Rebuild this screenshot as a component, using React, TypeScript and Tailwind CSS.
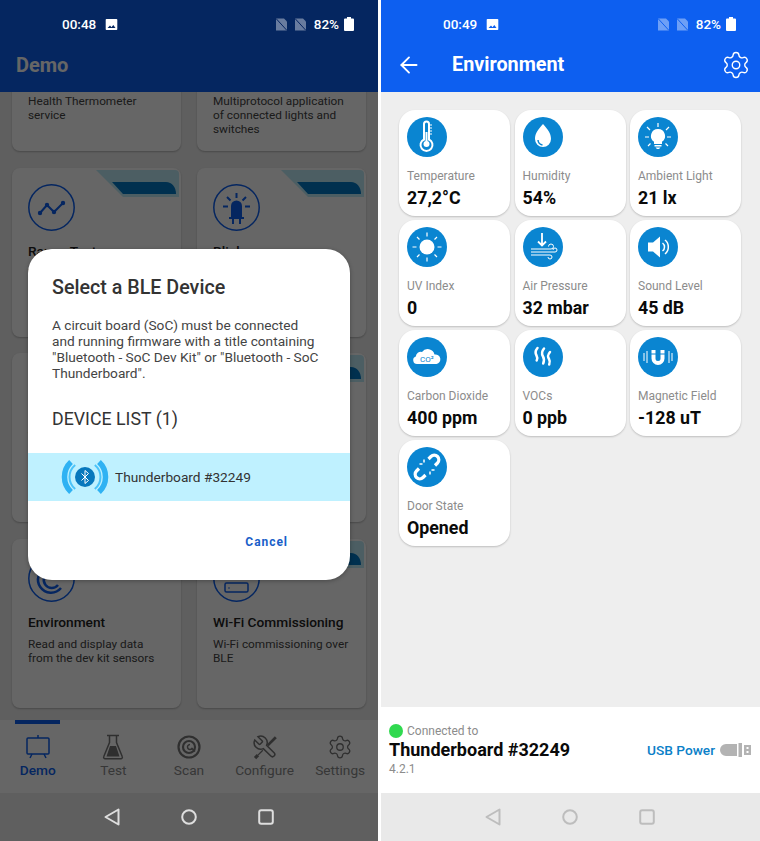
import { ArrowLeft, Settings } from "lucide-react";
import type { ReactNode } from "react";

const white = "#ffffff";

function ImageGlyph() {
  return (
    <svg width="13" height="13" viewBox="0 0 13 13">
      <path fill={white} fillRule="evenodd" d="M1.5 1h10a.8.8 0 0 1 .8.8v9.4a.8.8 0 0 1-.8.8h-10a.8.8 0 0 1-.8-.8V1.800a.8.8 0 0 1 .8-.8zM2.500 10h8L8.300 7 6.500 9.200 5 7.500z" />
    </svg>
  );
}

function NoSim({ cut }: { cut: string }) {
  return (
    <svg width="11" height="13" viewBox="0 0 11 13">
      <path fill={white} fillOpacity="0.4" d="M0 .5h8L11 3.500V12.500H0z" />
      <path stroke={cut} strokeWidth="1" d="M0 .5L11 12.500" />
    </svg>
  );
}

function Battery() {
  return (
    <svg width="10" height="14" viewBox="0 0 10 14">
      <path fill={white} d="M3 0h4v1.500h2a1 1 0 0 1 1 1V13a1 1 0 0 1-1 1H1a1 1 0 0 1-1-1V2.500a1 1 0 0 1 1-1h2z" />
    </svg>
  );
}

function StatusBar({ time, cut }: { time: string; cut: string }) {
  return (
    <div className="flex h-12 items-center pl-[62px] pr-[24px] text-[13.500px] font-medium text-white">
      <span>{time}</span>
      <span className="ml-[9px] flex"><ImageGlyph /></span>
      <span className="ml-auto flex gap-[8px]"><NoSim cut={cut} /><NoSim cut={cut} /></span>
      <span className="ml-[8px]">82%</span>
      <span className="ml-[5px] flex"><Battery /></span>
    </div>
  );
}

function NavBar({ color }: { color: string }) {
  return (
    <div className="flex h-12 items-center justify-center gap-[61px]">
      <svg width="16" height="18" viewBox="0 0 16 18" fill="none" stroke={color} strokeWidth="2" strokeLinejoin="round"><path d="M14.500 1.500v15L1.500 9z" /></svg>
      <svg width="16" height="16" viewBox="0 0 16 16" fill="none" stroke={color} strokeWidth="2"><circle cx="8" cy="8" r="6.800" /></svg>
      <svg width="16" height="16" viewBox="0 0 16 16" fill="none" stroke={color} strokeWidth="2"><rect x="1.200" y="1.200" width="13.600" height="13.600" rx="2" /></svg>
    </div>
  );
}

const blue = "#0d5ff0";

function Ribbon() {
  return (
    <svg className="absolute right-[2px] top-[2px]" width="83" height="27" viewBox="0 0 83 27">
      <path fill="#bfeaf7" d="M0 0H79a4 4 0 0 1 4 4V27H27z" />
      <path fill="#0079c6" d="M16 12H70c6 0 10 5 10 12H27z" />
    </svg>
  );
}

function RangeIcon() {
  return (
    <svg width="47" height="47" viewBox="0 0 47 47" fill="none">
      <circle cx="23.500" cy="23.500" r="22.700" stroke={blue} strokeWidth="1.500" />
      <path d="M12 29l7-8 7 7 9-9" stroke={blue} strokeWidth="2" />
      <circle cx="12" cy="29" r="2.200" fill={blue} /><circle cx="19" cy="21" r="2.200" fill={blue} />
      <circle cx="26" cy="28" r="2.200" fill={blue} /><circle cx="35" cy="19" r="2.200" fill={blue} />
    </svg>
  );
}

function BlinkyIcon() {
  return (
    <svg width="47" height="47" viewBox="0 0 47 47" fill="none">
      <circle cx="23.500" cy="23.500" r="22.700" stroke={blue} strokeWidth="1.500" />
      <path fill={blue} d="M18 33V22a5.500 5.500 0 0 1 11 0v11z" />
      <path d="M16 34h15M20 34v6M27 34v6" stroke={blue} strokeWidth="2" />
      <path d="M23.500 9v5M14 13l3.500 3.500M33 13l-3.500 3.500M10 22.500h5M32 22.500h5" stroke={blue} strokeWidth="2" />
    </svg>
  );
}

function EnvIcon() {
  return (
    <svg width="47" height="47" viewBox="0 0 47 47" fill="none">
      <circle cx="23.500" cy="23.500" r="22.700" stroke={blue} strokeWidth="1.500" />
      <path d="M33 33a13 13 0 1 1 3-9" stroke={blue} strokeWidth="2.500" />
      <path d="M30 30a8 8 0 1 1 1.500-7" stroke={blue} strokeWidth="2.500" />
    </svg>
  );
}

function WifiIcon() {
  return (
    <svg width="47" height="47" viewBox="0 0 47 47" fill="none">
      <circle cx="23.500" cy="23.500" r="22.700" stroke={blue} strokeWidth="1.500" />
      <rect x="12" y="28" width="23" height="9" rx="1.500" stroke={blue} strokeWidth="1.500" />
      <circle cx="16" cy="33" r=".8" fill={blue} />
    </svg>
  );
}

type DemoCard = { title: string; desc: string; icon?: ReactNode; ribbon?: boolean };

const demoCards: DemoCard[] = [
  { title: "Health Thermometer", desc: "Health Thermometer service" },
  { title: "Connected Lighting", desc: "Multiprotocol application of connected lights and switches" },
  { title: "Range Test", desc: "Visualize the RF performance", icon: <RangeIcon />, ribbon: true },
  { title: "Blinky", desc: "The Bluetooth equivalent of Hello World", icon: <BlinkyIcon />, ribbon: true },
  { title: "Throughput", desc: "Measure the data rate", icon: <RangeIcon />, ribbon: true },
  { title: "Motion", desc: "Display the board orientation", icon: <EnvIcon />, ribbon: true },
  { title: "Environment", desc: "Read and display data from the dev kit sensors", icon: <EnvIcon />, ribbon: true },
  { title: "Wi-Fi Commissioning", desc: "Wi-Fi commissioning over BLE", icon: <WifiIcon />, ribbon: true },
];

function DemoTile({ card }: { card: DemoCard }) {
  return (
    <div className="relative h-[169px] rounded-[8px] bg-white pl-4 pr-[10px] pt-[16px] shadow-[0_1px_2px_rgba(0,0,0,0.25)]">
      {card.ribbon && <Ribbon />}
      <div className={card.icon ? "h-[47px]" : "h-[61px]"}>{card.icon}</div>
      <div className="mt-[10px] text-[13.700px] font-medium leading-[20px] text-[#222]">{card.title}</div>
      <div className="mt-[5px] text-[11.800px] leading-[14px] text-[#444]">{card.desc}</div>
    </div>
  );
}

function TabIcon({ name, color }: { name: string; color: string }) {
  if (name === "Demo") {
    return (
      <svg width="24" height="26" viewBox="0 0 24 26" fill="none" stroke={color} strokeWidth="1.500">
        <rect x="1" y="4" width="22" height="16" rx="1" />
        <path d="M12 1v3M6 20l-2 4M18 20l2 4" />
      </svg>
    );
  }
  if (name === "Test") {
    return (
      <svg width="22" height="26" viewBox="0 0 22 26" fill="none" stroke={color} strokeWidth="1.500">
        <path d="M5 1.500h12M7.500 1.500v7L1.800 22.500a1.500 1.500 0 0 0 1.500 2.200h15.400a1.500 1.500 0 0 0 1.500-2.200L14.500 8.500v-7" />
        <path fill={color} stroke="none" d="M8 12h6l3.500 10.500h-13z" />
      </svg>
    );
  }
  if (name === "Scan") {
    return (
      <svg width="24" height="24" viewBox="0 0 24 24" fill="none" stroke={color} strokeWidth="2.200">
        <circle cx="12" cy="12" r="10.500" />
        <circle cx="12" cy="12" r="6" />
        <path d="M13 9.500a2.500 2.500 0 1 0 2 4l3 3" strokeWidth="1.500" />
      </svg>
    );
  }
  if (name === "Configure") {
    return (
      <svg width="26" height="26" viewBox="0 0 24 24" fill="none" stroke={color} strokeWidth="1.400">
        <path transform="translate(24 0) scale(-1 1)" d="M14.700 6.300a1 1 0 0 0 0 1.400l1.600 1.600a1 1 0 0 0 1.400 0l3.770-3.770a6 6 0 0 1-7.940 7.940l-6.910 6.910a2.120 2.120 0 0 1-3-3l6.910-6.910a6 6 0 0 1 7.940-7.940l-3.760 3.760z" />
        <path d="M22 3l-7.500 7.500" strokeWidth="2.500" />
        <path d="M10 15l-4.500 4.500" strokeWidth="1.200" />
        <path d="M5.500 19.500L2.800 22.200" strokeWidth="3" />
      </svg>
    );
  }
  return <Settings size={26} color={color} strokeWidth={1.200} />;
}

const tabs = ["Demo", "Test", "Scan", "Configure", "Settings"];

function BottomTabs() {
  return (
    <div className="grid h-[73px] grid-cols-5 bg-white">
      {tabs.map((t, i) => (
        <div key={t} className="relative flex flex-col items-center pt-[13px]">
          {i === 0 && <div className="absolute left-[15px] top-0 h-[4px] w-[45px] bg-[#0d5ff0]" />}
          <div className="flex h-[27px] items-center justify-center">
            <TabIcon name={t} color={i === 0 ? "#0d5ff0" : "#777777"} />
          </div>
          <div className={`text-[13.700px] leading-[20px] ${i === 0 ? "font-medium text-[#0d5ff0]" : "text-[#8a8a8a]"}`}>{t}</div>
        </div>
      ))}
    </div>
  );
}

function BleBadge() {
  return (
    <svg width="48" height="34" viewBox="0 0 48 34" fill="none">
      <path stroke="#2fb2f3" strokeWidth="5.500" d="M10 2A20.500 20.500 0 0 0 10 32M38 2A20.500 20.500 0 0 1 38 32" />
      <path stroke="#4cc4f9" strokeWidth="2" d="M14.200 5A15.500 15.500 0 0 0 14.200 29M33.800 5A15.500 15.500 0 0 1 33.800 29" />
      <circle cx="24" cy="17" r="10" fill="#0878bd" />
      <path stroke="#fff" strokeWidth="1" d="M20.500 13.500l7 7L24 23.500v-13l3.500 3-7 7" />
    </svg>
  );
}

function LeftPhone() {
  return (
    <div className="relative flex h-full w-[378px] flex-col overflow-hidden bg-[#eeeeee]">
      <div className="relative z-10 bg-[#0d5ff0]">
        <div className="h-[92px] pl-4 pt-[48px] text-[20px] font-bold leading-[34px] text-white">Demo</div>
      </div>
      <div className="min-h-0 flex-1 overflow-hidden">
        <div className="mt-[-110px] grid grid-cols-2 gap-x-[16px] gap-y-[16.500px] pl-[12px] pr-[12px]">
          {demoCards.map((c) => (
            <DemoTile key={c.title} card={c} />
          ))}
        </div>
      </div>
      <div className="relative z-10"><BottomTabs /></div>
      <div className="relative z-10 h-12 bg-[#eeeeee]" />
      <div className="absolute inset-0 z-20 bg-black/60" />
      <div className="absolute inset-x-0 top-0 z-30"><StatusBar time="00:48" cut="#052562" /></div>
      <div className="absolute inset-x-0 bottom-0 z-30"><NavBar color="#dedede" /></div>
      <div className="absolute left-[28px] top-[249px] z-30 h-[331px] w-[322px] overflow-hidden rounded-[24px] bg-white shadow-[0_1px_4px_rgba(0,0,0,0.3)]">
        <div className="px-6 pt-[24px] text-[19.700px] font-medium leading-[30px] text-[#333]">Select a BLE Device</div>
        <p className="mt-[14px] max-w-[293px] pl-6 text-[13.700px] leading-[16px] text-[#444]">
          A circuit board (SoC) must be connected and running firmware with a title containing "Bluetooth - SoC Dev Kit" or "Bluetooth - SoC Thunderboard".
        </p>
        <div className="mt-[26px] px-6 text-[17.800px] leading-[24px] text-[#333]">DEVICE LIST (1)</div>
        <div className="mt-[22px] flex h-[48px] items-center bg-[#bff1ff] pl-[33px]">
          <BleBadge />
          <span className="ml-[6px] text-[13.700px] text-[#333]">Thunderboard #32249</span>
        </div>
        <div className="mt-[33px] pr-[62px] text-right text-[12px] font-bold leading-[16px] tracking-[0.08em] text-[#1a5fc9]">Cancel</div>
      </div>
    </div>
  );
}

function Circle({ children }: { children: ReactNode }) {
  return (
    <div className="flex h-10 w-10 items-center justify-center rounded-full bg-[#0a85d1]">{children}</div>
  );
}

const s = { fill: "none", stroke: white, strokeWidth: 1.500 };

const sensors: { label: string; value: string; icon: ReactNode }[] = [
  {
    label: "Temperature",
    value: "27,2°C",
    icon: (
      <svg width="40" height="40" viewBox="0 0 40 40">
        <path {...s} strokeWidth={2} d="M17 7a2.500 2.500 0 0 1 5 0v15.500a6 6 0 1 1-5 0z" />
        <path stroke={white} strokeWidth="1" d="M22 8h3M22 11h3M22 14h3M22 17h3" />
        <circle cx="19.500" cy="27" r="3" fill={white} />
        <path stroke={white} strokeWidth="2" d="M19.500 15v10" />
      </svg>
    ),
  },
  {
    label: "Humidity",
    value: "54%",
    icon: (
      <svg width="40" height="40" viewBox="0 0 40 40">
        <path fill={white} d="M20 7c5 6 8 9 8 15a8 8 0 0 1-16 0c0-6 3-9 8-15z" />
        <path {...s} stroke="#0a85d1" d="M15 23a5.500 5.500 0 0 0 4.500 5" />
      </svg>
    ),
  },
  {
    label: "Ambient Light",
    value: "21 lx",
    icon: (
      <svg width="40" height="40" viewBox="0 0 40 40">
        <path fill={white} d="M20 12a7 7 0 0 1 4 12.800V27h-8v-2.200A7 7 0 0 1 20 12zM16.500 28h7v1.500h-7zM17.500 30.500h5L21 32h-2z" />
        <path {...s} strokeWidth={1.200} d="M20 6v4M9 10l3 3M31 10l-3 3M7 20h4M29 20h4M10 29l2.500-2.500M30 29l-2.500-2.500" />
      </svg>
    ),
  },
  {
    label: "UV Index",
    value: "0",
    icon: (
      <svg width="40" height="40" viewBox="0 0 40 40">
        <circle cx="20" cy="20" r="7.500" fill={white} />
        <path {...s} strokeWidth={1.200} d="M20 5.500v4M20 30.500v4M5.500 20h4M30.500 20h4M10 10l2.500 2.500M30 10l-2.500 2.500M10 30l2.500-2.500M30 30l-2.500-2.500" />
      </svg>
    ),
  },
  {
    label: "Air Pressure",
    value: "32 mbar",
    icon: (
      <svg width="40" height="40" viewBox="0 0 40 40">
        <path {...s} strokeWidth={1.800} d="M19 6v12M15 14.500l4 4 4-4" />
        <path {...s} strokeWidth={1} d="M8 22h20a2.500 2.500 0 1 0-2.500-2.500M8 25h24a2 2 0 1 0-2-2M8 28h19a2 2 0 1 1-2 2" />
      </svg>
    ),
  },
  {
    label: "Sound Level",
    value: "45 dB",
    icon: (
      <svg width="40" height="40" viewBox="0 0 40 40">
        <path fill={white} d="M10 15.500h5l7-6v21l-7-6h-5z" />
        <path {...s} d="M24.500 16a5 5 0 0 1 0 8M27 13a9 9 0 0 1 0 14" />
      </svg>
    ),
  },
  {
    label: "Carbon Dioxide",
    value: "400 ppm",
    icon: (
      <svg width="40" height="40" viewBox="0 0 40 40">
        <path fill={white} d="M10 27a3.800 3.800 0 0 1-1.200-7.400A5 5 0 0 1 15 15 7 7 0 0 1 27.500 17.500 4.800 4.800 0 0 1 29.500 27z" />
        <text x="13" y="24.500" fontSize="8" fill="#0a85d1" fontFamily="Roboto, sans-serif">CO²</text>
      </svg>
    ),
  },
  {
    label: "VOCs",
    value: "0 ppb",
    icon: (
      <svg width="40" height="40" viewBox="0 0 40 40">
        <g {...s} strokeWidth={2.500} strokeLinecap="round">
          <path d="M14.500 11c-2.500 3-2.500 5-1 7.500 1.200 2 1 3.500.2 5" />
          <path d="M21 11.500c-2.500 3-2.500 5.500-1 8 1.200 2 1.200 4.500.2 7" />
          <path d="M27 15c-2.500 3-2.500 4.500-1 7 1.200 2 1 3.500.2 5.500" />
        </g>
      </svg>
    ),
  },
  {
    label: "Magnetic Field",
    value: "-128 uT",
    icon: (
      <svg width="40" height="40" viewBox="0 0 40 40">
        <path fill={white} d="M13.500 13h4v8.500a2.500 2.500 0 0 0 5 0V13h4v8.500a6.500 6.500 0 0 1-13 0z" />
        <path stroke="#0a85d1" strokeWidth="1" d="M13 17h5M22 17h5" />
        <path {...s} strokeWidth={1} d="M6 16v8M9 14v12M31 14v12M34 16v8" />
      </svg>
    ),
  },
  {
    label: "Door State",
    value: "Opened",
    icon: (
      <svg width="40" height="40" viewBox="0 0 40 40">
        <g {...s} strokeWidth={3.200} strokeLinecap="butt">
          <path d="M21.500 12l2.500-2.500a4.500 4.500 0 0 1 6.500 6.500L28 18.500" />
          <path d="M18.500 28L16 30.500A4.500 4.500 0 0 1 9.500 24L12 21.500" />
        </g>
        <path {...s} strokeWidth={1.500} d="M17 12.500v3M12.500 17h3M23 27.500v-3M27.500 23h-3" />
      </svg>
    ),
  },
];

function UsbIcon() {
  return (
    <svg width="32" height="14" viewBox="0 0 32 14">
      <path fill="#b3b3b3" d="M7 1h11v12H7a6 6 0 0 1 0-12zM19.500 0h3.500v14h-3.500z" />
      <path fill="#b3b3b3" fillRule="evenodd" d="M25 2h7v10h-7zM27.500 4v2h2V4zM27.500 8v2h2V8z" />
    </svg>
  );
}

function RightPhone() {
  return (
    <div className="flex h-full w-[379px] flex-col bg-[#eeeeee]">
      <div className="h-[92px] bg-[#0d5ff0]">
        <StatusBar time="00:49" cut="#0d5ff0" />
        <div className="flex h-[34px] items-center pl-[15px] pr-[9px] text-white">
          <ArrowLeft size={26} strokeWidth={1.700} />
          <span className="ml-[30px] text-[19.800px] font-bold">Environment</span>
          <Settings className="ml-auto" size={30} strokeWidth={1.100} />
        </div>
      </div>
      <div className="min-h-0 flex-1 px-[18px] pt-[18px]">
        <div className="grid w-[342px] grid-cols-3 gap-[4.500px]">
          {sensors.map((x) => (
            <div key={x.label} className="h-[105.500px] rounded-[16px] bg-white pl-[8px] pt-[7px] shadow-[0_1px_2px_rgba(0,0,0,0.2)]">
              <Circle>{x.icon}</Circle>
              <div className="mt-[11px] text-[12px] leading-[16px] text-[#8c8c8c]">{x.label}</div>
              <div className="mt-[1px] text-[17.800px] font-bold leading-[26px] text-[#0a0a0a]">{x.value}</div>
            </div>
          ))}
        </div>
      </div>
      <div className="flex h-[86px] items-center bg-white pl-[8px] pr-[9px]">
        <div className="flex-1">
          <div className="flex items-center">
            <span className="h-[14px] w-[14px] rounded-full bg-[#30d94f]" />
            <span className="ml-[4px] text-[12px] leading-[16px] text-[#8c8c8c]">Connected to</span>
          </div>
          <div className="pt-[1px] text-[18px] font-bold leading-[20px] text-[#0a0a0a]">Thunderboard #32249</div>
          <div className="mt-[1px] text-[12px] leading-[16px] text-[#8c8c8c]">4.2.1</div>
        </div>
        <span className="mr-[4px] text-[13.700px] font-medium text-[#0a80c8]">USB Power</span>
        <UsbIcon />
      </div>
      <div className="bg-[#e9e9e9] pr-[2px]"><NavBar color="#bdbdbd" /></div>
    </div>
  );
}

export default function App() {
  return (
    <div className="flex h-[841px] w-[760px] gap-[3px] bg-white font-['Roboto',sans-serif]">
      <LeftPhone />
      <RightPhone />
    </div>
  );
}
